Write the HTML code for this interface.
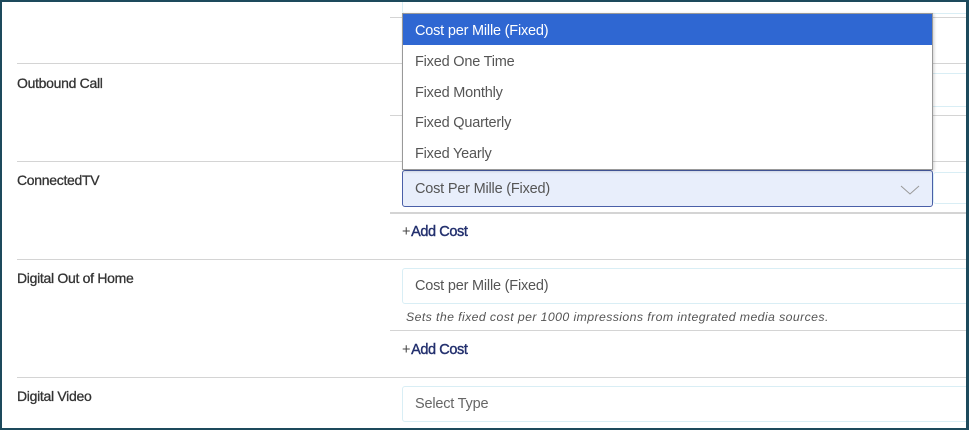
<!DOCTYPE html>
<html><head><style>
*{box-sizing:border-box;margin:0;padding:0}
body{width:969px;height:430px;overflow:hidden;background:#fff;font-family:"Liberation Sans",sans-serif;position:relative}
.frame{position:absolute;left:0;top:0;width:969px;height:430px;border:2px solid #1d4a5c;border-right-width:3px;z-index:10;pointer-events:none}
.hl{position:absolute;height:1px;background:#d4d4d4}
.lbl{position:absolute;left:17px;font-size:14px;color:#333;letter-spacing:-0.3px;-webkit-text-stroke:0.3px #333}
.inp{position:absolute;left:402px;width:580px;border:1px solid #d9eef5;border-radius:3px;font-size:14.5px;color:#555;padding-left:12px;background:#fff;letter-spacing:-0.2px}
.add{position:absolute;left:402px;font-size:14.5px;color:#23306e;letter-spacing:-0.4px;-webkit-text-stroke:0.4px #23306e}
.add b{font-weight:normal;color:#444;-webkit-text-stroke:0;margin-right:1px}
.dd{position:absolute;left:402px;top:13px;width:531px;height:157px;border:1px solid #999;background:#fff;box-shadow:1px 1px 3px rgba(0,0,0,.2);z-index:5}
.dd div{height:30.5px;line-height:34px;padding-left:12px;font-size:14.5px;color:#555;letter-spacing:-0.2px}
.dd .sel{background:#2f67d2;color:#fff;height:31px;line-height:35px}
</style></head><body>
<div class="frame"></div>
<div class="inp" style="top:-4px;height:18px"></div>
<div class="hl" style="left:390px;top:17px;width:579px"></div>
<div class="hl" style="left:17px;top:63px;width:952px"></div>
<div class="lbl" style="top:75px">Outbound Call</div>
<div class="inp" style="top:73px;height:34px;border-left:2px solid #3a62c0"></div>
<div class="hl" style="left:390px;top:115px;width:579px"></div>
<div class="hl" style="left:17px;top:161px;width:952px"></div>
<div class="lbl" style="top:172px">ConnectedTV</div>
<div class="inp" style="top:170px;height:37px;width:531px;background:#e8eefb;border:1px solid #4a5fa8;line-height:37px;color:#555">Cost Per Mille (Fixed)
<svg style="position:absolute;right:12px;top:14px" width="20" height="10" viewBox="0 0 20 10"><path d="M1 1L10 9L19 1" fill="none" stroke="#999" stroke-width="1"/></svg></div>
<div class="inp" style="top:172px;left:933px;height:32px;width:60px"></div>
<div class="hl" style="left:390px;top:212px;width:579px;height:2px"></div>
<div class="add" style="top:224px"><b>+</b>Add Cost</div>
<div class="hl" style="left:17px;top:259px;width:952px"></div>
<div class="lbl" style="top:270px">Digital Out of Home</div>
<div class="inp" style="top:268px;height:36px;line-height:34px">Cost per Mille (Fixed)</div>
<div style="position:absolute;left:406px;top:310px;font-size:12.3px;font-style:italic;color:#555;letter-spacing:0.4px">Sets the fixed cost per 1000 impressions from integrated media sources.</div>
<div class="hl" style="left:390px;top:330px;width:579px"></div>
<div class="add" style="top:342px"><b>+</b>Add Cost</div>
<div class="hl" style="left:17px;top:377px;width:952px"></div>
<div class="lbl" style="top:388px">Digital Video</div>
<div class="inp" style="top:386px;height:36px;line-height:34px;color:#666">Select Type</div>
<div class="dd">
<div class="sel">Cost per Mille (Fixed)</div>
<div>Fixed One Time</div>
<div>Fixed Monthly</div>
<div>Fixed Quarterly</div>
<div>Fixed Yearly</div>
</div>
</body></html>
